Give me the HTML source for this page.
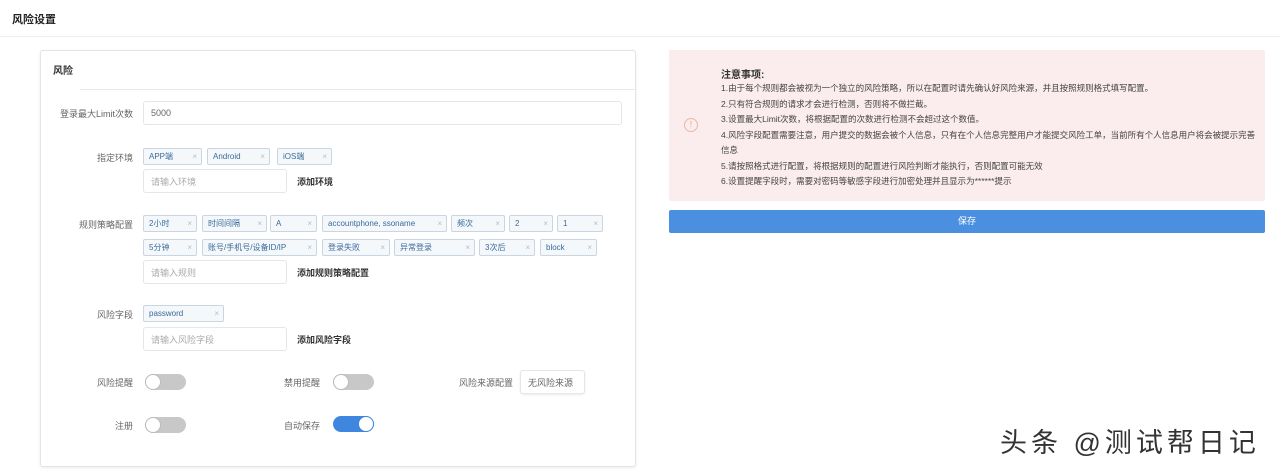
<!DOCTYPE html><html><head><meta charset="utf-8"><style>
*{margin:0;padding:0;box-sizing:border-box}
body{width:1280px;height:470px;background:#fff;font-family:"Liberation Sans","Noto Sans CJK SC",sans-serif;position:relative;overflow:hidden;color:#555;font-size:9px}
.a{position:absolute;white-space:nowrap}
.lab{position:absolute;text-align:right;width:100px;font-size:9px;color:#666}
.inp{position:absolute;border:1px solid #e3e6ea;border-radius:3px;background:#fff;color:#aaa;padding-left:7px;font-size:9px;display:flex;align-items:center}
.tag{position:absolute;border:1px solid #c9d6e2;border-radius:2px;background:#f4f8fb;color:#3a6a9a;font-size:8px;padding-left:5px;height:17px;line-height:15px}
.tag:after{content:"×";position:absolute;right:4px;color:#bbb}
.tg{position:absolute;width:41px;height:16px;border-radius:8px;background:#c8c8c8}
.tg:before{content:"";position:absolute;left:0;top:0;width:16px;height:16px;border-radius:50%;background:#fff;border:1px solid #bbb;box-sizing:border-box}
.tg.on{background:#3f86de}
.tg.on:before{left:auto;right:0;border-color:#3f86de}
.btn{position:absolute;font-size:9px;color:#333;font-weight:bold}
</style></head><body>
<div class="a" style="left:12px;top:11px;font-size:11px;font-weight:bold;color:#222">风险设置</div>
<div class="a" style="left:0;top:36px;width:1280px;height:1px;background:#eee"></div>
<div class="a" style="left:40px;top:50px;width:596px;height:417px;border:1px solid #e2e4e7;border-radius:3px;box-shadow:0 1px 3px rgba(0,0,0,.08)"></div>
<div class="a" style="left:53px;top:62px;font-size:10px;font-weight:bold;color:#333">风险</div>
<div class="a" style="left:80px;top:89px;width:555px;height:1px;background:#e8e8e8"></div>

<div class="lab" style="left:33px;top:107px">登录最大Limit次数</div>
<div class="inp" style="left:143px;top:101px;width:479px;height:24px;color:#666">5000</div>

<div class="lab" style="left:33px;top:151px">指定环境</div>
<div class="tag" style="left:143px;top:148px;width:59px">APP端</div>
<div class="tag" style="left:207px;top:148px;width:63px">Android</div>
<div class="tag" style="left:277px;top:148px;width:55px">iOS端</div>
<div class="inp" style="left:143px;top:169px;width:144px;height:24px">请输入环境</div>
<div class="btn" style="left:297px;top:175px">添加环境</div>

<div class="lab" style="left:33px;top:218px">规则策略配置</div>
<div class="tag" style="left:143px;top:215px;width:54px">2小时</div>
<div class="tag" style="left:202px;top:215px;width:65px">时间间隔</div>
<div class="tag" style="left:270px;top:215px;width:47px">A</div>
<div class="tag" style="left:322px;top:215px;width:125px">accountphone, ssoname</div>
<div class="tag" style="left:451px;top:215px;width:54px">频次</div>
<div class="tag" style="left:509px;top:215px;width:44px">2</div>
<div class="tag" style="left:557px;top:215px;width:46px">1</div>
<div class="tag" style="left:143px;top:239px;width:54px">5分钟</div>
<div class="tag" style="left:202px;top:239px;width:115px">账号/手机号/设备ID/IP</div>
<div class="tag" style="left:322px;top:239px;width:68px">登录失败</div>
<div class="tag" style="left:394px;top:239px;width:81px">异常登录</div>
<div class="tag" style="left:479px;top:239px;width:56px">3次后</div>
<div class="tag" style="left:540px;top:239px;width:57px">block</div>
<div class="inp" style="left:143px;top:260px;width:144px;height:24px">请输入规则</div>
<div class="btn" style="left:297px;top:266px">添加规则策略配置</div>

<div class="lab" style="left:33px;top:308px">风险字段</div>
<div class="tag" style="left:143px;top:305px;width:81px">password</div>
<div class="inp" style="left:143px;top:327px;width:144px;height:24px">请输入风险字段</div>
<div class="btn" style="left:297px;top:333px">添加风险字段</div>

<div class="lab" style="left:33px;top:376px">风险提醒</div>
<div class="tg" style="left:145px;top:374px"></div>
<div class="lab" style="left:220px;top:376px">禁用提醒</div>
<div class="tg" style="left:333px;top:374px"></div>
<div class="lab" style="left:413px;top:376px">风险来源配置</div>
<div class="inp" style="left:520px;top:370px;width:65px;height:24px;color:#666;box-shadow:0 1px 2px rgba(0,0,0,.08)">无风险来源</div>

<div class="lab" style="left:33px;top:419px">注册</div>
<div class="tg" style="left:145px;top:417px"></div>
<div class="lab" style="left:220px;top:419px">自动保存</div>
<div class="tg on" style="left:333px;top:416px"></div>

<div class="a" style="left:669px;top:50px;width:596px;height:151px;background:#fbeced;border-radius:2px"></div>
<div class="a" style="left:684px;top:118px;width:14px;height:14px;border:1px solid #e8b8a8;border-radius:50%;color:#e0a090;font-size:8px;text-align:center;line-height:12px">!</div>
<div class="a" style="left:721px;top:66px;font-size:10px;font-weight:bold;color:#333">注意事项:</div>
<div class="a" style="left:721px;top:81px;font-size:8.5px;line-height:15.5px;color:#444">
1.由于每个规则都会被视为一个独立的风险策略，所以在配置时请先确认好风险来源，并且按照规则格式填写配置。<br>
2.只有符合规则的请求才会进行检测，否则将不做拦截。<br>
3.设置最大Limit次数，将根据配置的次数进行检测不会超过这个数值。<br>
4.风险字段配置需要注意，用户提交的数据会被个人信息，只有在个人信息完整用户才能提交风险工单，当前所有个人信息用户将会被提示完善<br>信息<br>
5.请按照格式进行配置，将根据规则的配置进行风险判断才能执行，否则配置可能无效<br>
6.设置提醒字段时，需要对密码等敏感字段进行加密处理并且显示为******提示</div>
<div class="a" style="left:669px;top:210px;width:596px;height:23px;background:#4a8fe0;border-radius:2px;color:#fff;font-size:9px;text-align:center;line-height:23px">保存</div>
<div class="a" style="left:1000px;top:421px;font-size:27px;letter-spacing:4px;color:#333">头条 @测试帮日记</div>
</body></html>
